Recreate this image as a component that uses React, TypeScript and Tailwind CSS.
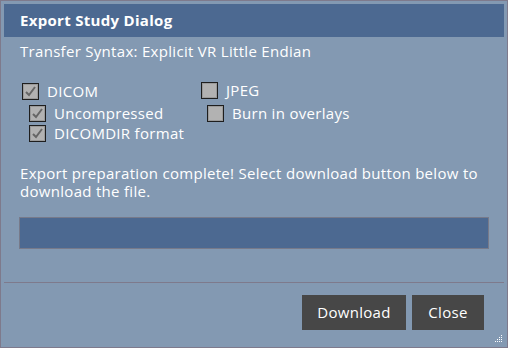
import React from 'react'

function Box({checked}:{checked:boolean}){
  return(
    <span className="w-[17px] h-[17px] border border-[#1e1e1e] bg-[#b2b2b2] shadow-[inset_0_0_0_1px_#9a9a9a] flex items-center justify-center shrink-0">
      {checked&&(
        <svg width="13" height="13" viewBox="0 0 13 13">
          <path d="M2 7 L5 10 L11 2" fill="none" stroke="#666" strokeWidth="2"/>
        </svg>
      )}
    </span>
  )
}

function Check({label,checked,className=''}:{label:string;checked:boolean;className?:string}){
  return(
    <div className={`flex items-center gap-[8px] h-[20px] ${className}`}>
      <Box checked={checked}/>
      <span>{label}</span>
    </div>
  )
}

export default function App(){
  return(
    <div className="w-[508px] h-[348px] border border-[#7e7a8c] bg-[#8399b2] p-[3px] flex flex-col text-white text-[15px] leading-[19px] tracking-[0.3px] font-['Open_Sans',sans-serif]">
      <div className="h-[33px] bg-[#4c6991] flex items-center px-4 font-bold">Export Study Dialog</div>
      <div className="px-[16px] pt-[5px] flex flex-col">
        <p>Transfer Syntax: Explicit VR Little Endian</p>
        <div className="flex mt-[20px] pl-[2px]">
          <div className="w-[179px] flex flex-col">
            <Check label="DICOM" checked={true}/>
            <Check label="Uncompressed" checked={true} className="ml-[7px] mt-[2px]"/>
            <Check label="DICOMDIR format" checked={true} className="ml-[7px]"/>
          </div>
          <div className="flex flex-col">
            <Check label="JPEG" checked={false} className="-mt-[1px]"/>
            <Check label="Burn in overlays" checked={false} className="ml-[6px] mt-[3px]"/>
          </div>
        </div>
        <p className="mt-[21px] leading-[18px]">Export preparation complete! Select download button below to download the file.</p>
        <div className="mt-[17px] -ml-[1px] h-[32px] w-[470px] bg-[#4c6991] border border-[#777a8a]"></div>
      </div>
      <div className="mt-auto border-t border-[#7e7a8c] h-[62px] relative flex justify-end items-start pt-[12px] pr-[20px] gap-[6px]">
        <button className="w-[104px] h-[35px] bg-[#474747] text-white">Download</button>
        <button className="w-[72px] h-[35px] bg-[#474747] text-white">Close</button>
        <svg className="absolute right-[2px] bottom-[2px]" width="7" height="7" viewBox="0 0 7 7">
          <path d="M6 0h1v1h-1zM4 2h1v1h-1zM6 2h1v1h-1zM2 4h1v1h-1zM4 4h1v1h-1zM6 4h1v1h-1zM0 6h1v1h-1zM2 6h1v1h-1zM4 6h1v1h-1zM6 6h1v1h-1z" fill="#fff"/>
        </svg>
      </div>
    </div>
  )
}
